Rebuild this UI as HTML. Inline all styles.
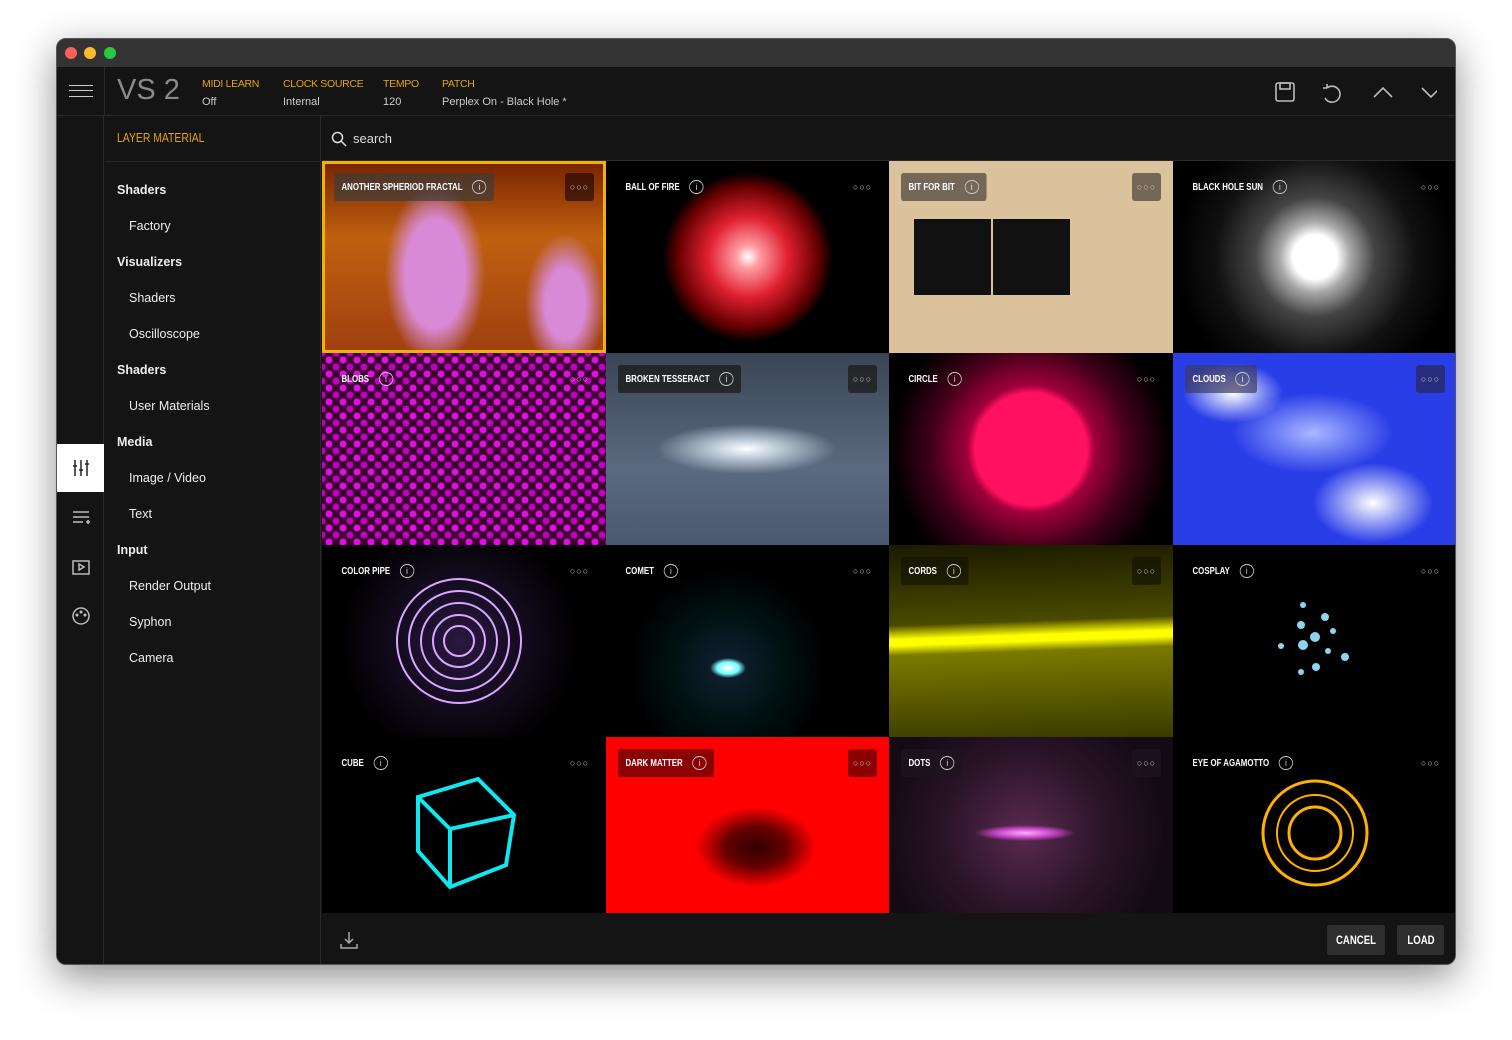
<!DOCTYPE html>
<html><head><style>
*{margin:0;padding:0;box-sizing:border-box}
body{width:1512px;height:1040px;background:#fff;font-family:"Liberation Sans",sans-serif;position:relative;overflow:hidden}
.win{position:absolute;left:56px;top:38px;width:1400px;height:927px;border-radius:10px;overflow:hidden;background:#141414;box-shadow:0 12px 40px rgba(0,0,0,.45);border:1px solid #555}
.tb{position:absolute;left:0;top:0;width:100%;height:28px;background:#333}
.dot{position:absolute;top:8px;width:12px;height:12px;border-radius:50%}
.hdr{position:absolute;top:28px;left:0;width:100%;height:49px;background:#141414;border-bottom:1px solid #2a2a2a}
.lab{position:absolute;top:11px;color:#e5a50a;font-size:10.5px;letter-spacing:-.3px}
.val{position:absolute;top:29px;color:#ccc;font-size:11px}
.icol{position:absolute;left:0;top:77px;width:47px;bottom:0;background:#141414;border-right:1px solid #2a2a2a}
.lp{position:absolute;left:48px;top:77px;width:216px;bottom:0;background:#141414;border-right:1px solid #2a2a2a}
.lp div{position:absolute;color:#eee;font-size:12.5px}
.lp .h{font-weight:bold;left:12px}
.lp .s{left:24px}
.srch{position:absolute;left:265px;top:77px;right:0;height:45px;background:#141414;border-bottom:1px solid #2a2a2a}
.grid{position:absolute;left:265px;top:122px;width:1135px;height:752px;display:grid;grid-template-columns:284px 283px 284px 284px;grid-template-rows:192px 192px 192px 176px;overflow:hidden}
.c{position:relative;overflow:hidden}
.t{position:absolute;left:12px;top:12px;height:28px;padding:0 10px;display:flex;align-items:center;color:#fff;font-size:10.5px;font-weight:bold;border-radius:3px;transform:scaleX(.75);transform-origin:left;white-space:nowrap}
.t i{display:inline-block;width:19px;height:14px;border:1px solid #ccc;border-radius:50%;margin-left:13px;font-style:normal;font-size:9px;text-align:center;line-height:12px;font-weight:normal}
.m{position:absolute;right:12px;top:12px;width:29px;height:28px;color:#ccc;font-size:9px;text-align:center;line-height:28px;border-radius:3px;letter-spacing:1px}
.bg{background:rgba(60,60,60,.7)}
.foot{position:absolute;left:265px;top:874px;right:0;bottom:0;background:#141414}
.btn{position:absolute;top:12px;height:30px;background:#2e2e2e;color:#fff;font-size:12px;font-weight:bold;line-height:30px;text-align:center;border-radius:2px}
.btn b{display:inline-block;transform:scaleX(.8)}
</style></head><body>
<div class="win">
<div class="tb"><div class="dot" style="left:8px;background:#fe5f57"></div><div class="dot" style="left:27px;background:#febc2e"></div><div class="dot" style="left:47px;background:#28c840"></div></div>
<div class="hdr">
<div style="position:absolute;left:12px;top:18px;width:24px;height:12px;border-top:1.5px solid #ccc;border-bottom:1.5px solid #ccc"><div style="margin-top:4px;border-top:1.5px solid #ccc"></div></div>
<div style="position:absolute;left:47px;top:0;width:1px;height:49px;background:#2a2a2a"></div>
<div style="position:absolute;left:60px;top:7px;color:#8a8a8a;font-size:29px;font-weight:300">VS 2</div>
<div class="lab" style="left:145px">MIDI LEARN</div><div class="val" style="left:145px">Off</div>
<div class="lab" style="left:226px">CLOCK SOURCE</div><div class="val" style="left:226px">Internal</div>
<div class="lab" style="left:326px">TEMPO</div><div class="val" style="left:326px">120</div>
<div class="lab" style="left:385px">PATCH</div><div class="val" style="left:385px">Perplex On - Black Hole *</div>
<svg style="position:absolute;left:1210px;top:12px" width="170" height="26" fill="none" stroke="#bbb" stroke-width="1.6"><rect x="9" y="4" width="18" height="18" rx="2"/><rect x="13" y="4" width="10" height="6"/><path d="M60 9a8 8 0 1 1-2 10M60 9v-4M60 9h-4"/><path d="M107 18l9-9 9 9M155 9l9 9 9-9"/></svg>
</div>
<div class="icol">
<div style="position:absolute;left:0;top:328px;width:47px;height:48px;background:#fff"></div>
<svg style="position:absolute;left:14px;top:342px" width="20" height="20" stroke="#222" stroke-width="1.5"><path d="M4 2v16M10 2v16M16 2v16M2 8h4M8 12h4M14 6h4"/></svg>
<svg style="position:absolute;left:14px;top:392px" width="20" height="20" stroke="#bbb" stroke-width="1.5" fill="none"><path d="M2 4h16M2 9h16M2 14h10M15 14h4M17 12v4"/></svg>
<svg style="position:absolute;left:14px;top:441px" width="20" height="20" stroke="#bbb" stroke-width="1.5" fill="none"><rect x="2" y="4" width="16" height="13"/><path d="M8 7l5 3-5 3z"/></svg>
<svg style="position:absolute;left:14px;top:490px" width="20" height="20" stroke="#bbb" stroke-width="1.5" fill="none"><circle cx="10" cy="10" r="8"/><circle cx="6" cy="9" r=".8"/><circle cx="10" cy="6" r=".8"/><circle cx="14" cy="9" r=".8"/></svg>
</div>
<div class="lp">
<div style="left:12px;top:14px;color:#e5a50a;font-size:13px;transform:scaleX(.8);transform-origin:left">LAYER MATERIAL</div>
<div style="left:0;top:45px;width:216px;height:1px;background:#2a2a2a"></div>
<div class="h" style="top:67px">Shaders</div>
<div class="s" style="top:103px">Factory</div>
<div class="h" style="top:139px">Visualizers</div>
<div class="s" style="top:175px">Shaders</div>
<div class="s" style="top:211px">Oscilloscope</div>
<div class="h" style="top:247px">Shaders</div>
<div class="s" style="top:283px">User Materials</div>
<div class="h" style="top:319px">Media</div>
<div class="s" style="top:355px">Image / Video</div>
<div class="s" style="top:391px">Text</div>
<div class="h" style="top:427px">Input</div>
<div class="s" style="top:463px">Render Output</div>
<div class="s" style="top:499px">Syphon</div>
<div class="s" style="top:535px">Camera</div>
</div>
<div class="srch"><svg style="position:absolute;left:9px;top:15px" width="16" height="16" stroke="#ddd" stroke-width="1.5" fill="none"><circle cx="6.5" cy="6.5" r="5"/><path d="M10 10l5 5"/></svg><div style="position:absolute;left:31px;top:15px;color:#ddd;font-size:13px">search</div></div>
<div class="grid">
<div class="c" style="background:radial-gradient(ellipse 50px 90px at 110px 110px,#d98ad6 60%,transparent 100%),radial-gradient(ellipse 40px 70px at 240px 140px,#d98ad6 50%,transparent 100%),linear-gradient(180deg,#7a2500,#c06010 40%,#a04010);border:3px solid #f0b400"><div class="t bg" style="left:9px;top:9px">ANOTHER SPHERIOD FRACTAL<i>i</i></div><div class="m bg" style="background:rgba(40,10,10,.7);right:9px;top:9px">○○○</div></div>
<div class="c" style="background:radial-gradient(circle at 142px 96px,#fff 0,#ff9aa0 12px,#e02030 40px,#600 70px,#000 85px)"><div class="t">BALL OF FIRE<i>i</i></div><div class="m">○○○</div></div>
<div class="c" style="background:#d9c29c"><div style="position:absolute;left:25px;top:58px;width:77px;height:76px;background:#111"></div><div style="position:absolute;left:104px;top:58px;width:77px;height:76px;background:#111"></div><div class="t" style="background:rgba(90,80,70,.8)">BIT FOR BIT<i>i</i></div><div class="m" style="background:rgba(90,80,70,.8)">○○○</div></div>
<div class="c" style="background:radial-gradient(circle at 142px 96px,#fff 0,#fff 22px,#aaa 35px,#444 60px,#111 100px,#000 140px)"><div class="t">BLACK HOLE SUN<i>i</i></div><div class="m">○○○</div></div>
<div class="c" style="background:radial-gradient(circle,#e010e0 3px,transparent 4px) 0 0/14px 14px,radial-gradient(circle,#c000c0 3px,transparent 4px) 7px 7px/14px 14px,#3a0030"><div class="t">BLOBS<i>i</i></div><div class="m">○○○</div></div>
<div class="c" style="background:radial-gradient(ellipse 90px 25px at 140px 96px,#fff 0,#c8d4e0 30%,transparent 100%),linear-gradient(180deg,#3a4555,#5a6a80 60%,#4a5870)"><div class="t" style="background:rgba(30,30,30,.8)">BROKEN TESSERACT<i>i</i></div><div class="m" style="background:rgba(30,30,30,.8)">○○○</div></div>
<div class="c" style="background:radial-gradient(circle at 142px 96px,#ff1060 0,#ff1060 56px,#a0003a 64px,#400018 100px,#000 140px)"><div class="t">CIRCLE<i>i</i></div><div class="m">○○○</div></div>
<div class="c" style="background:radial-gradient(ellipse 50px 30px at 60px 40px,#fff,transparent),radial-gradient(ellipse 60px 40px at 200px 150px,#fff,transparent),radial-gradient(ellipse 80px 40px at 140px 80px,#aab8ff,transparent),#2a3ee8"><div class="t" style="background:rgba(60,60,100,.7)">CLOUDS<i>i</i></div><div class="m" style="background:rgba(40,40,80,.7)">○○○</div></div>
<div class="c" style="background:radial-gradient(circle at 137px 96px,#2a1840,#000 120px)"><svg width="284" height="192" style="position:absolute;left:0;top:0" fill="none" stroke="#d8a8ff" stroke-width="2"><circle cx="137" cy="96" r="62"/><circle cx="137" cy="96" r="50"/><circle cx="137" cy="96" r="38"/><circle cx="137" cy="96" r="26"/><circle cx="137" cy="96" r="15"/></svg><div class="t">COLOR PIPE<i>i</i></div><div class="m">○○○</div></div>
<div class="c" style="background:radial-gradient(ellipse 18px 10px at 122px 123px,#fff,#7ff 60%,transparent),radial-gradient(circle at 122px 123px,#123 0,#001010 60px,#000 100px)"><div class="t">COMET<i>i</i></div><div class="m">○○○</div></div>
<div class="c" style="background:linear-gradient(178deg,#1a1a00,#4a4a00 40%,#ff0 47%,#ff0 50%,#7a7a00 55%,#3a3a00)"><div class="t" style="background:rgba(20,20,0,.7)">CORDS<i>i</i></div><div class="m" style="background:rgba(20,20,0,.7)">○○○</div></div>
<div class="c" style="background:#000"><svg width="284" height="192" style="position:absolute;left:0;top:0" fill="#8cd4f0"><circle cx="142" cy="92" r="5"/><circle cx="128" cy="80" r="4"/><circle cx="130" cy="100" r="5"/><circle cx="160" cy="86" r="3"/><circle cx="172" cy="112" r="4"/><circle cx="143" cy="122" r="4"/><circle cx="108" cy="101" r="3"/><circle cx="130" cy="60" r="3"/><circle cx="155" cy="106" r="3"/><circle cx="152" cy="72" r="4"/><circle cx="128" cy="127" r="3"/></svg><div class="t">COSPLAY<i>i</i></div><div class="m">○○○</div></div>
<div class="c" style="background:#000"><svg width="284" height="176" style="position:absolute;left:0;top:0" fill="none" stroke="#10e8f0" stroke-width="4"><path d="M96 60l60-18 36 36-8 50-56 22-32-36z M96 60l32 32 64-14 M128 92l0 58"/></svg><div class="t">CUBE<i>i</i></div><div class="m">○○○</div></div>
<div class="c" style="background:radial-gradient(ellipse 60px 40px at 150px 110px,#300 0,#600 50%,transparent 100%),#f00"><div class="t" style="background:rgba(90,0,0,.7)">DARK MATTER<i>i</i></div><div class="m" style="background:rgba(90,0,0,.7)">○○○</div></div>
<div class="c" style="background:radial-gradient(ellipse 50px 8px at 136px 96px,#ffb0ff,#c040c0 60%,transparent),radial-gradient(circle at 136px 96px,#5a2a50,#2a1428 80px,#140a14 140px)"><div class="t" style="background:rgba(30,20,30,.7)">DOTS<i>i</i></div><div class="m" style="background:rgba(30,20,30,.7)">○○○</div></div>
<div class="c" style="background:#000"><svg width="284" height="176" style="position:absolute;left:0;top:0" fill="none" stroke="#ffb000" stroke-width="3"><circle cx="142" cy="96" r="52"/><circle cx="142" cy="96" r="38" stroke-width="2"/><circle cx="142" cy="96" r="26"/></svg><div class="t">EYE OF AGAMOTTO<i>i</i></div><div class="m">○○○</div></div>
</div>
<div class="foot"><svg style="position:absolute;left:18px;top:18px" width="18" height="18" stroke="#aaa" stroke-width="1.5" fill="none"><path d="M9 1v11M5 8l4 4 4-4M1 13v4h16v-4"/></svg>
<div class="btn" style="left:1005px;width:58px"><b>CANCEL</b></div><div class="btn" style="left:1075px;width:47px"><b>LOAD</b></div></div>
</div>
</body></html>
